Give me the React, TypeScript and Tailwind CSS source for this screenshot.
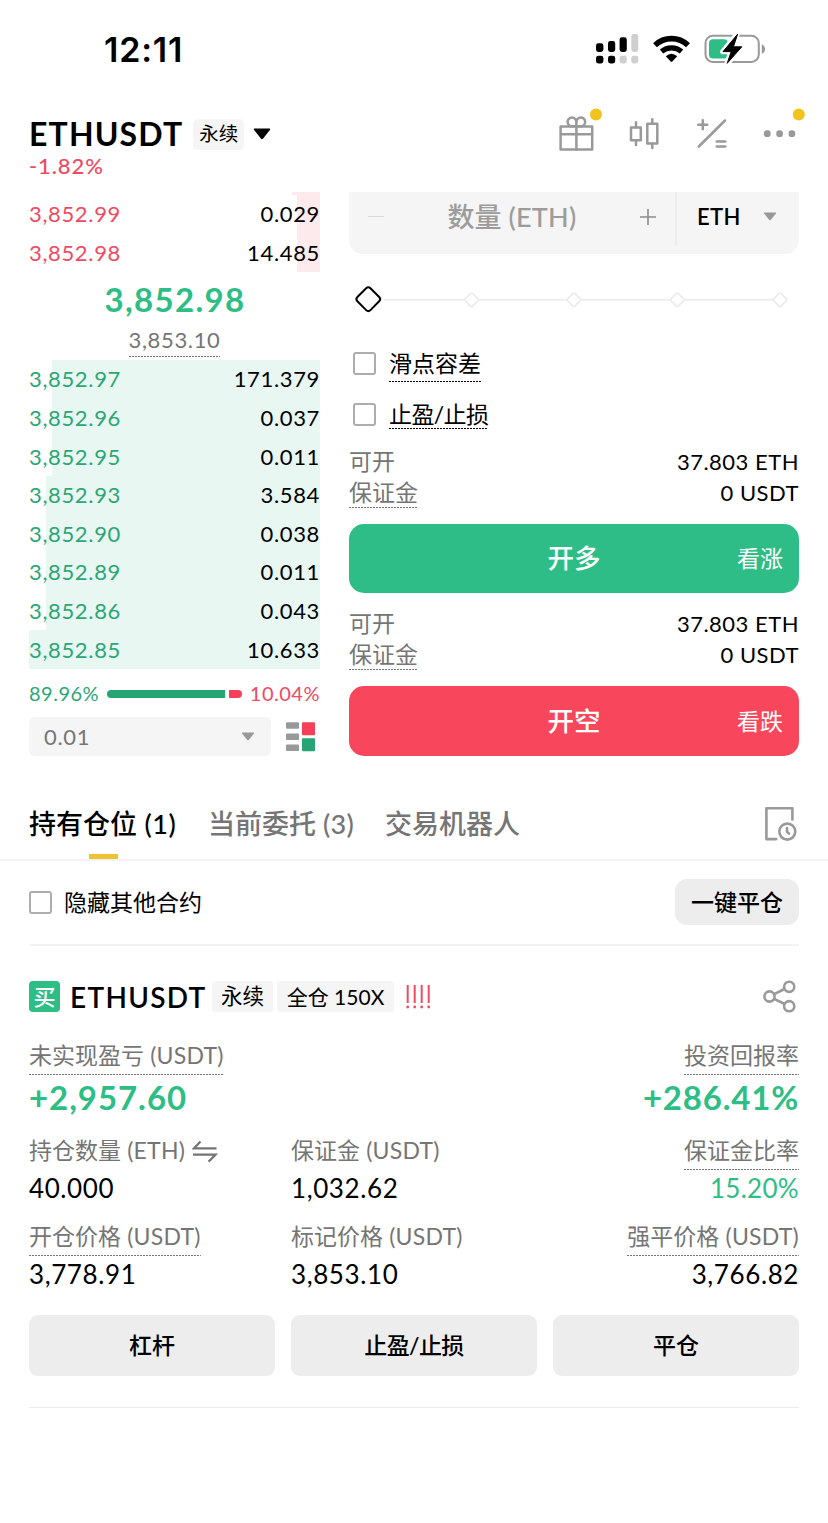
import React from "react";
import clsx from "clsx";

type TOrder = { price: string; amount: string; depth: string };

const asks: TOrder[] = [
  { price: "3,852.99", amount: "0.029", depth: "w-[23px]" },
  { price: "3,852.98", amount: "14.485", depth: "w-[23px]" },
];

const bids: TOrder[] = [
  { price: "3,852.97", amount: "171.379", depth: "w-[268px]" },
  { price: "3,852.96", amount: "0.037", depth: "w-[268px]" },
  { price: "3,852.95", amount: "0.011", depth: "w-[268px]" },
  { price: "3,852.93", amount: "3.584", depth: "w-[274px]" },
  { price: "3,852.90", amount: "0.038", depth: "w-[274px]" },
  { price: "3,852.89", amount: "0.011", depth: "w-[274px]" },
  { price: "3,852.86", amount: "0.043", depth: "w-[274px]" },
  { price: "3,852.85", amount: "10.633", depth: "w-[291px]" },
];

function Dotted({ children, className }: { children: React.ReactNode; className?: string }) {
  return (
    <span
      className={clsx(
        "block w-fit whitespace-nowrap bg-[repeating-linear-gradient(90deg,currentColor_0_2px,transparent_2px_3px)] bg-[length:100%_1px] bg-bottom bg-no-repeat",
        className
      )}
    >
      {children}
    </span>
  );
}

function Unit({ children }: { children: React.ReactNode }) {
  return <span className="tracking-[0.25px]"> ({children})</span>;
}

function Checkbox() {
  return <span className="mb-px block h-[23px] w-[23px] shrink-0 rounded-[3px] border-2 border-[#adadad]" />;
}

function Caret({ className }: { className?: string }) {
  return (
    <svg viewBox="0 0 18 12" className={className} fill="currentColor">
      <path d="M1.5 0.5h15q1.2 0.3 0.4 1.4l-7 8.8q-0.9 0.9-1.8 0l-7-8.8q-0.8-1.1 0.4-1.4z" />
    </svg>
  );
}

function StatusBar() {
  return (
    <div className="flex h-[98px] items-center justify-between pl-[104px] pr-[62px]">
      <span className="pt-[2px] font-['Inter'] text-[34px] font-semibold leading-none tracking-[0.8px]">
        12:11
      </span>
      <svg viewBox="594 30 172 38" className="h-[38px] w-[172px]">
        <rect x="596" y="43.3" width="7.4" height="8.6" rx="2.4" />
        <rect x="608" y="41" width="7.2" height="10.9" rx="2.4" />
        <rect x="619.6" y="37.3" width="7.2" height="14.6" rx="2.4" />
        <rect x="631.3" y="34" width="7" height="17.9" rx="2.4" fill="#cfcfcf" />
        <rect x="596" y="55.8" width="7.4" height="7.6" rx="2.4" />
        <rect x="608" y="55.8" width="7.2" height="7.6" rx="2.4" />
        <rect x="619.6" y="55.8" width="7.2" height="7.6" rx="2.4" fill="#cfcfcf" />
        <rect x="631.3" y="55.8" width="7" height="7.6" rx="2.4" fill="#cfcfcf" />
        {/* wifi */}
        <g fill="none" stroke="#000">
          <path d="M655 45.2a24 24 0 0 1 33 0" strokeWidth="5.6" />
          <path d="M661.5 51.6a15.5 15.5 0 0 1 20 0" strokeWidth="5.2" />
        </g>
        <path d="M665.8 56.2q5.7-5 11.4 0l-4.9 5.3q-0.8 0.8-1.6 0z" />
        {/* battery */}
        <rect x="705.5" y="35.7" width="53.3" height="26.3" rx="7.5" fill="none" stroke="#999" strokeWidth="2" />
        <rect x="709" y="39.2" width="19" height="19.3" rx="4" fill="#2ebd85" />
        <path d="M761.8 44.3c4.4 1.6 4.4 8 0 9.4z" fill="#999" />
        <path
          d="M737.6 33.2 722.5 51.8h8.2L726.6 64.5 742 46.5h-8.2z"
          stroke="#fff"
          strokeWidth="5"
          strokeLinejoin="round"
        />
        <path d="M737.6 34.2 723 51.6h8.2L727.2 63.3 741.8 46.8h-8.4z" stroke="#000" strokeLinejoin="round" />
      </svg>
    </div>
  );
}

function Header() {
  return (
    <div className="flex h-[94px] justify-between pl-[29px] pr-[20px]">
      <div className="pt-[18px]">
        <div className="flex h-9 items-center">
          <h1 className="text-[32px] font-bold leading-9 tracking-[1.15px]">ETHUSDT</h1>
          <span className="ml-[10px] h-[31px] rounded-[5px] bg-[#f5f5f5] px-[6px] text-[19.5px] leading-[30px]">
            永续
          </span>
          <Caret className="ml-[9px] h-3 w-[18px]" />
        </div>
        <p className="h-[30px] text-[22px] font-medium leading-[28px] tracking-[0.9px] text-[#ef4a63]">-1.82%</p>
      </div>
      <svg
        viewBox="556 106 252 46"
        className="mt-2 h-[46px] w-[252px]"
        fill="none"
        stroke="#999"
        strokeWidth="2.5"
        strokeLinejoin="round"
        strokeLinecap="round"
      >
        <rect x="560.6" y="126.6" width="31.6" height="23" />
        <path d="M561 134.3h31M576.4 127v22.5" />
        <path d="M576.4 126.3h-4.2a4.4 4.4 0 1 1 4.2-4.4zM576.4 126.3h4.2a4.4 4.4 0 1 0-4.2-4.4z" />
        <rect x="631" y="127.6" width="9.8" height="12.6" />
        <path d="M636 122.2v5M636 140.5v4.5M652.3 119.2v4M652.3 143.7v4.4" />
        <rect x="647.3" y="123.8" width="10" height="19.7" />
        <path d="M698.3 124.8h9M702.8 120.3v9M698.8 146.5l26.2-26M716.7 141.5h8.6M716.7 146.6h8.6" />
        <g fill="#999" stroke="none">
          <rect x="764" y="130.3" width="6.6" height="6.8" rx="2.8" />
          <rect x="776.3" y="130.3" width="6.6" height="6.8" rx="2.8" />
          <rect x="788.6" y="130.3" width="6.6" height="6.8" rx="2.8" />
        </g>
        <g fill="#f0c31f" stroke="none">
          <circle cx="596" cy="114.4" r="6" />
          <circle cx="798.8" cy="114.4" r="6" />
        </g>
      </svg>
    </div>
  );
}

function OrderRow({ order, side }: { order: TOrder; side: "ask" | "bid" }) {
  return (
    <div className="relative flex h-[38.65px] items-center justify-between pb-px text-[22px] tracking-[0.65px]">
      <div
        className={clsx(
          "absolute inset-y-0 right-0",
          order.depth,
          side === "ask" ? "bg-[#fdeaec]" : "bg-[#e9f7f2]"
        )}
      />
      <span className={clsx("relative", side === "ask" ? "text-[#ef4a63]" : "text-[#2ba675]")}>
        {order.price}
      </span>
      <span className="relative">{order.amount}</span>
    </div>
  );
}

function OrderBook() {
  return (
    <div className="w-[291px]">
      <div className="ml-auto h-[3px] w-7 bg-[#fdeaec]" />
      {asks.map((order) => (
        <OrderRow key={order.price} order={order} side="ask" />
      ))}
      <div className="flex h-[87.7px] flex-col items-center">
        <p className="h-[54px] pl-px text-[33px] font-bold leading-[54px] tracking-[1.3px] text-[#2ebd85]">3,852.98</p>
        <Dotted className="h-[31px] text-[22px] leading-[27px] tracking-[0.65px] text-[#757575]">3,853.10</Dotted>
      </div>
      {bids.map((order) => (
        <OrderRow key={order.price} order={order} side="bid" />
      ))}
      <div className="flex h-12 items-center text-[20px] tracking-[0.5px]">
        <span className="w-[78px] text-[#2ba675]">89.96%</span>
        <span className="mt-[2px] h-2 w-[118px] rounded-l-full bg-[#26a574]" />
        <span className="ml-1 mt-[2px] h-2 w-[13px] rounded-r-full bg-[#f6405a]" />
        <span className="ml-auto text-[#ef4a63]">10.04%</span>
      </div>
      <div className="flex items-center">
        <div className="flex h-[39px] w-[242px] items-center justify-between rounded-[6px] bg-[#f5f5f5] pl-[15px] pr-[16px]">
          <span className="text-[22px] tracking-[0.7px] text-[#757575]">0.01</span>
          <Caret className="h-[9px] w-[14px] text-[#999]" />
        </div>
        <svg viewBox="286 722 30 30" className="ml-[15px] h-[30px] w-[30px]">
          <g fill="#999">
            <rect x="286" y="722.3" width="13" height="6.5" rx="1" />
            <rect x="286" y="733.4" width="13" height="6.5" rx="1" />
            <rect x="286" y="744.6" width="13" height="6.5" rx="1" />
          </g>
          <rect x="302" y="722.3" width="13" height="13" rx="1" fill="#f6405a" />
          <rect x="302" y="738.2" width="13" height="13" rx="1" fill="#26a574" />
        </svg>
      </div>
    </div>
  );
}

function Limits() {
  return (
    <div className="text-[22px] leading-[29px]">
      <div className="flex h-[31px] justify-between">
        <span className="text-[23px] text-[#757575]">可开</span>
        <span className="tracking-[0.5px]">37.803 ETH</span>
      </div>
      <div className="flex h-[31px] justify-between">
        <Dotted className="h-[30px] text-[23px] text-[#757575]">保证金</Dotted>
        <span className="tracking-[0.5px]">0 USDT</span>
      </div>
    </div>
  );
}

function OrderForm() {
  return (
    <div className="w-[450px]">
      <div className="flex h-[62px] rounded-b-[14px] bg-[#f5f5f5]">
        <div className="flex h-[49px] w-[326px] items-center">
          <span className="ml-[19px] h-[1.5px] w-4 bg-[#d9d9d9]" />
          <span className="flex-1 pt-[2px] text-center text-[27px] font-medium text-[#9c9c9c]">
            数量<Unit>ETH</Unit>
          </span>
          <svg viewBox="0 0 16 16" className="mr-[19px] h-4 w-4" stroke="#8c8c8c" strokeWidth="1.6">
            <path d="M0 8h16M8 0v16" />
          </svg>
        </div>
        <div className="flex h-[53px] flex-1 items-center border-l-2 border-[#ececec] pb-1 pl-[20px]">
          <span className="text-[22px] font-semibold tracking-[0.4px]">ETH</span>
          <Caret className="ml-auto mr-[22px] h-[9px] w-[14px] text-[#999]" />
        </div>
      </div>
      <div className="flex h-[91px] items-center">
        <svg viewBox="349 284 450 31" className="h-[31px] w-[450px]" fill="#fff" strokeLinejoin="round">
          <path d="M384 299.7h395" stroke="#eee" strokeWidth="2" />
          {[471.5, 574, 677.3, 780].map((x) => (
            <rect
              key={x}
              x={x - 5.2}
              y="294.6"
              width="10.4"
              height="10.4"
              rx="2"
              transform={`rotate(45 ${x} 299.8)`}
              stroke="#ececec"
              strokeWidth="1.8"
            />
          ))}
          <rect
            x="359.1"
            y="290"
            width="18.4"
            height="18.4"
            rx="3"
            transform="rotate(45 368.3 299.2)"
            stroke="#000"
            strokeWidth="2"
          />
        </svg>
      </div>
      <label className="flex h-[37px] items-center pl-[4px]">
        <Checkbox />
        <Dotted className="ml-[13px] h-[37px] text-[23px] leading-[36px]">滑点容差</Dotted>
      </label>
      <label className="mt-[18px] flex h-[29px] items-center pl-[4px]">
        <Checkbox />
        <Dotted className="ml-[13px] h-[29px] text-[23px] leading-[28px] tracking-[-0.6px]">止盈/止损</Dotted>
      </label>
      <div className="mt-[18px]">
        <Limits />
      </div>
      <button className="relative mt-[15px] block h-[69px] w-full rounded-[15px] bg-[#2ebd87] pt-px text-[26.5px] font-medium text-white">
        开多
        <span className="absolute right-[16px] top-0 text-[23px] font-normal leading-[69px]">看涨</span>
      </button>
      <div className="mt-4">
        <Limits />
      </div>
      <button className="relative mt-[15px] block h-[70px] w-full rounded-[15px] bg-[#f8465d] pt-[2px] text-[26.5px] font-medium text-white">
        开空
        <span className="absolute right-[16px] top-0 text-[23px] font-normal leading-[70px]">看跌</span>
      </button>
    </div>
  );
}

function Tabs() {
  return (
    <div className="mt-8 flex h-[73px] items-center border-b-2 border-[#f3f3f3] pl-[29px] pr-[31px] text-[27px] font-medium leading-[71px] text-[#757575]">
      <div className="relative h-[71px] w-[148px] whitespace-nowrap text-black">
        持有仓位<span className="tracking-[0.6px]"> (1)</span>
        <span className="absolute bottom-0 left-[60px] h-[5px] w-[29px] bg-[#edc233]" />
      </div>
      <div className="ml-[31px] w-[147px] whitespace-nowrap">
        当前委托<Unit>3</Unit>
      </div>
      <div className="ml-[30px]">交易机器人</div>
      <svg
        viewBox="764 806 33 36"
        className="ml-auto h-9 w-[33px]"
        fill="none"
        stroke="#999"
        strokeWidth="2.6"
        strokeLinejoin="round"
        strokeLinecap="round"
      >
        <path d="M792.4 819.5v-11.2h-26v30.8h9.8" />
        <circle cx="787.3" cy="831.6" r="8" />
        <path d="M787 828v4l2 1.6" />
      </svg>
    </div>
  );
}

function Position() {
  return (
    <div className="px-[29px]">
      <div className="flex h-[85px] items-center border-b-2 border-[#f3f3f3]">
        <Checkbox />
        <span className="ml-[12px] pb-px text-[23px]">隐藏其他合约</span>
        <button className="mb-px ml-auto h-[46px] w-[124px] rounded-xl bg-[#ededed] text-[23px] font-medium">
          一键平仓
        </button>
      </div>

      <div className="mt-[35px] flex h-[31px] items-center whitespace-nowrap leading-[31px]">
        <span className="h-[31px] w-[31px] rounded-[4px] bg-[#2ebd85] text-center text-[22px] font-medium text-white">
          买
        </span>
        <h2 className="ml-[10px] w-[142px] text-[28px] font-semibold leading-8 tracking-[1.3px]">ETHUSDT</h2>
        <span className="w-[61px] rounded-[3px] bg-[#f5f5f5] text-center text-[21.5px]">永续</span>
        <span className="ml-1 w-[117px] rounded-[3px] bg-[#f5f5f5] text-center text-[21px]">全仓 150X</span>
        <svg viewBox="406 984 26 26" className="ml-3 h-[26px] w-[26px]" stroke="#ef4a63" strokeWidth="2">
          <path d="M407.7 985v18M414.7 985v18M421.7 985v18M428.7 985v18" />
          <path
            d="M407.7 1007h0.01M414.7 1007h0.01M421.7 1007h0.01M428.7 1007h0.01"
            strokeWidth="2.8"
            strokeLinecap="round"
          />
        </svg>
        <svg
          viewBox="763 980 34 34"
          className="ml-auto mr-[2px] h-[34px] w-[34px]"
          fill="none"
          stroke="#999"
          strokeWidth="2.6"
        >
          <circle cx="769.5" cy="996.5" r="5.1" />
          <circle cx="789.2" cy="986.8" r="5.1" />
          <circle cx="789.2" cy="1006.2" r="5.1" />
          <path d="M774.2 994.2l10.4-5.2M774.2 998.8l10.4 5.2" />
        </svg>
      </div>

      <div className="mt-[26px] flex justify-between text-[23px] leading-[35px] text-[#757575]">
        <Dotted className="h-[37px]">
          未实现盈亏<Unit>USDT</Unit>
        </Dotted>
        <Dotted className="h-[37px]">投资回报率</Dotted>
      </div>
      <div className="flex h-[46px] justify-between text-[33px] font-bold leading-[45px] tracking-[0.95px] text-[#2ebd85]">
        <span>+2,957.60</span>
        <span className="tracking-[0.8px]">+286.41%</span>
      </div>

      <div className="mt-3 grid grid-cols-[262px_262px_1fr] text-[23px] leading-[35px] text-[#757575]">
        <span className="flex h-[37px] whitespace-nowrap">
          <span>
            持仓数量<Unit>ETH</Unit>
          </span>
          <svg
            viewBox="193 1140 26 23"
            className="ml-[7px] mt-[7px] h-[23px] w-[26px]"
            fill="none"
            stroke="currentColor"
            strokeWidth="2.2"
          >
            <path d="M217.5 1148.4h-22.6l6.6-7M194 1154.6h22.6l-7 7" />
          </svg>
        </span>
        <span className="h-[37px] whitespace-nowrap">
          保证金<Unit>USDT</Unit>
        </span>
        <Dotted className="ml-auto h-[37px]">保证金比率</Dotted>
      </div>
      <div className="grid h-[37px] grid-cols-[262px_262px_1fr] text-[26px] leading-[37px] tracking-[0.6px]">
        <span>40.000</span>
        <span>1,032.62</span>
        <span className="text-right tracking-[0.3px] text-[#2ebd85]">15.20%</span>
      </div>

      <div className="mt-3 grid grid-cols-[262px_262px_1fr] text-[23px] leading-[35px] text-[#757575]">
        <Dotted className="h-[37px]">
          开仓价格<Unit>USDT</Unit>
        </Dotted>
        <span className="h-[37px] whitespace-nowrap">
          标记价格<Unit>USDT</Unit>
        </span>
        <Dotted className="ml-auto h-[37px]">
          强平价格<Unit>USDT</Unit>
        </Dotted>
      </div>
      <div className="grid h-[37px] grid-cols-[262px_262px_1fr] text-[26px] leading-[37px] tracking-[0.6px]">
        <span>3,778.91</span>
        <span>3,853.10</span>
        <span className="text-right">3,766.82</span>
      </div>

      <div className="mt-[22px] grid grid-cols-3 gap-4 text-[23px] font-medium">
        <button className="h-[61px] rounded-[9px] bg-[#ededed]">杠杆</button>
        <button className="h-[61px] rounded-[9px] bg-[#ededed] tracking-[-0.6px]">止盈/止损</button>
        <button className="h-[61px] rounded-[9px] bg-[#ededed]">平仓</button>
      </div>
      <div className="mt-[31px] h-px bg-[#ececec]" />
    </div>
  );
}

function App() {
  return (
    <div className="min-h-[1523px] w-[828px] overflow-hidden bg-white font-['Lato','Noto_Sans_CJK_SC',sans-serif] text-black">
      <StatusBar />
      <Header />
      <div className="flex h-[564px] justify-between px-[29px]">
        <OrderBook />
        <OrderForm />
      </div>
      <Tabs />
      <Position />
    </div>
  );
}

export default App;
